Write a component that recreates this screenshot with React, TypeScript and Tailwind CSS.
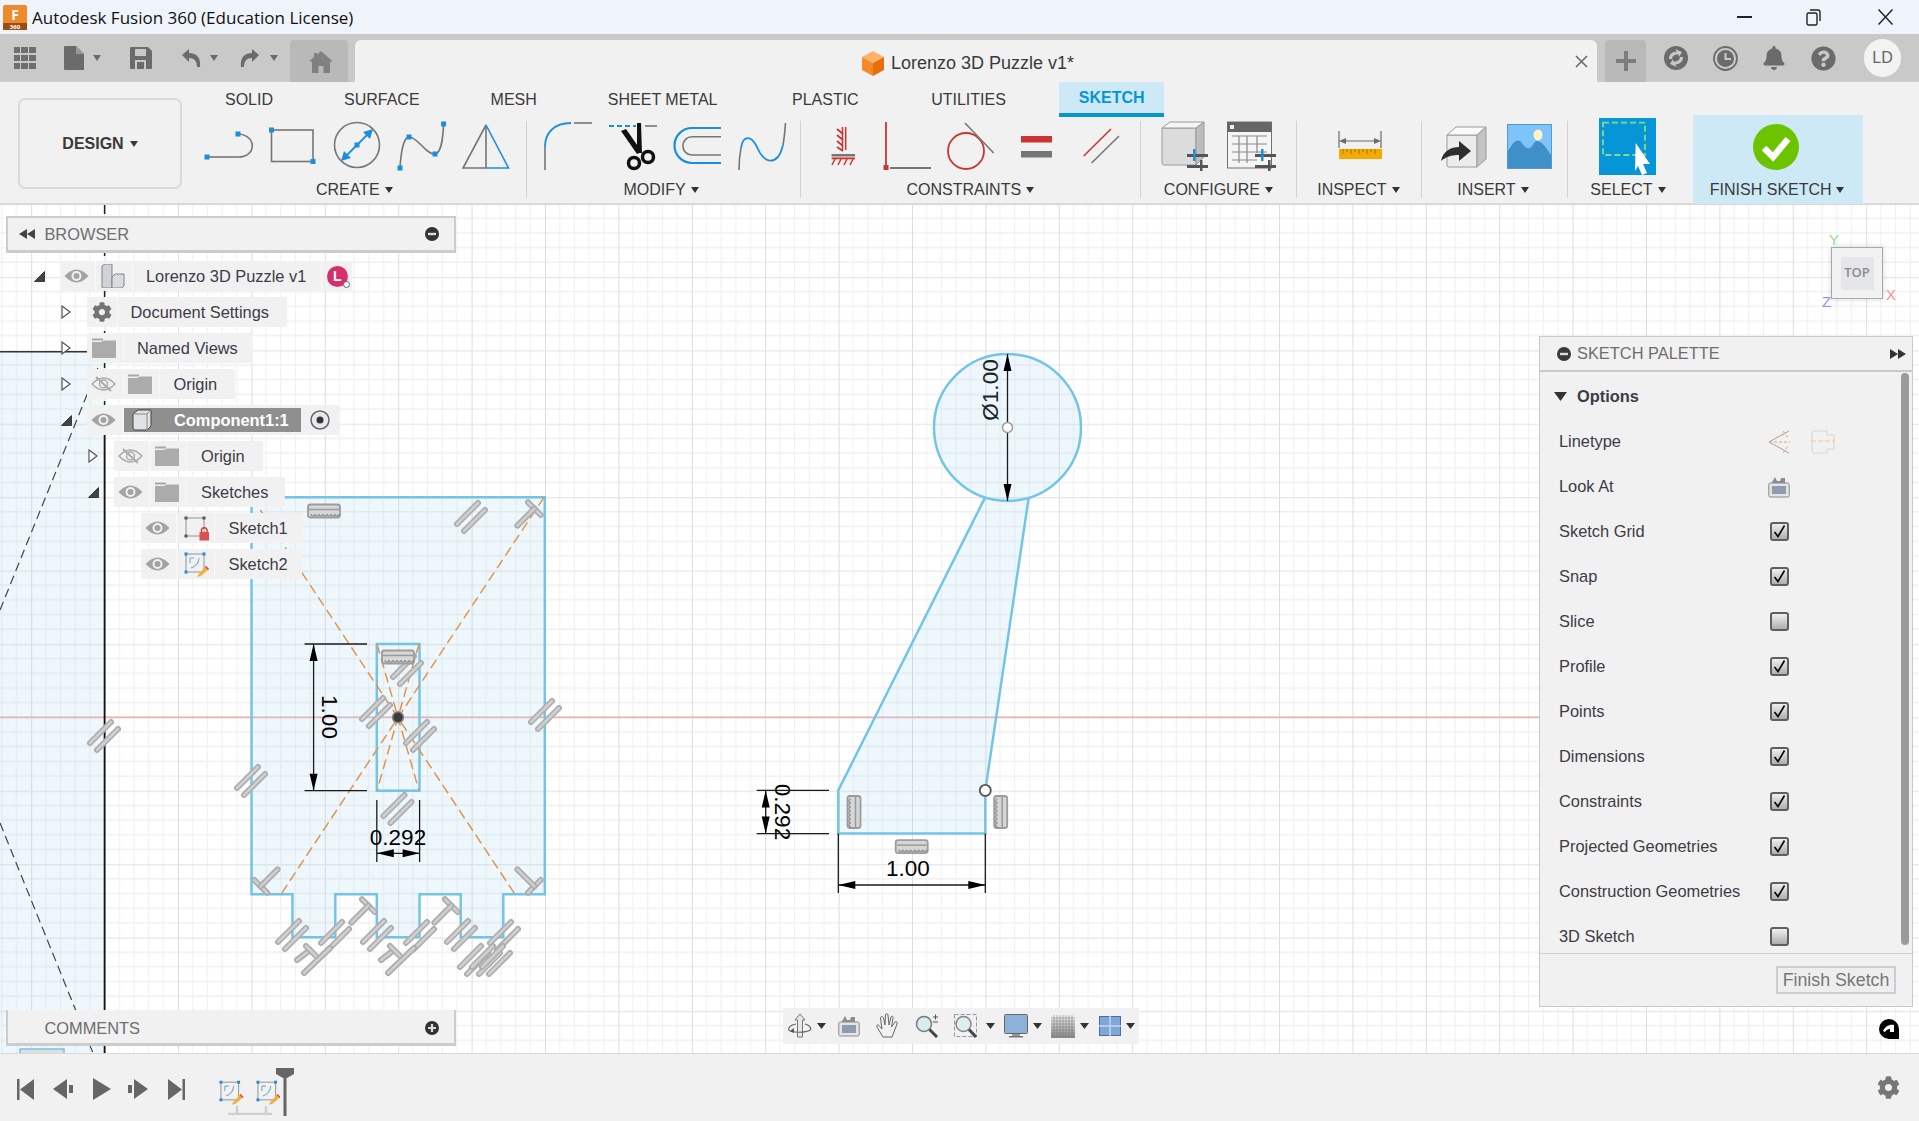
import type { ReactNode } from "react"
import { FaBell, FaCog, FaQuestionCircle } from "react-icons/fa"

const BLUE = "#1c8fdc"
const GREY = "#767676"
const DARK = "#6b6b6b"
const RED = "#cc3333"
const SKY = "#74c4e8"

const Caret = ({ className = "" }: { className?: string }) => (
  <svg width="8" height="6" viewBox="0 0 8 6" className={className}>
    <path d="M0 0H8L4 6Z" fill="currentColor" />
  </svg>
)

const Dot = ({ x, y, c = BLUE }: { x: number; y: number; c?: string }) => (
  <rect x={x - 2.5} y={y - 2.5} width="5" height="5" fill={c} />
)

const Tool = ({ children }: { children: ReactNode }) => (
  <svg width="48" height="48" viewBox="0 0 48 48" fill="none" className="shrink-0 overflow-visible">
    {children}
  </svg>
)

const Sliders = ({ x = 0 }: { x?: number }) => (
  <g>
    <rect x={x + 28} y="33" width="21" height="3" fill="#555" />
    <rect x={x + 28} y="44" width="21" height="3" fill="#555" />
    <rect x={x + 34} y="28" width="2.5" height="12" fill={BLUE} />
    <rect x={x + 41} y="39" width="2.5" height="11" fill="#555" />
  </g>
)

const Group = ({
  label,
  width,
  labelClass = "",
  children,
  divider = true,
}: {
  label: string
  width: string
  labelClass?: string
  children: ReactNode
  divider?: boolean
}) => (
  <div className={`flex h-[77px] shrink-0 flex-col items-center ${width} ${divider ? "border-r border-[#d2d2d2]" : ""}`}>
    <div className="flex h-[48px] gap-[16.4px]">{children}</div>
    <div className={`mt-[12px] flex h-[18px] items-center gap-[5px] text-[16px] leading-none text-[#3a3a3a] ${labelClass}`}>
      {label}
      <Caret className="text-[#333]" />
    </div>
  </div>
)

const Eye = ({ off = false }: { off?: boolean }) => (
  <svg width="25" height="16" viewBox="0 0 25 16">
    {off ? (
      <g fill="none" stroke="#a8a8a8" strokeWidth="1.4">
        <path d="M1 8Q12.5 -4 24 8Q12.5 20 1 8Z" />
        <circle cx="12.5" cy="8" r="4" />
        <path d="M5 1L20 15" strokeWidth="1.8" />
      </g>
    ) : (
      <g>
        <path d="M0.5 8Q12.5 -5 24.5 8Q12.5 21 0.5 8Z" fill="#a3a3a3" />
        <circle cx="12.5" cy="8" r="5" fill="#f1f1f1" />
        <circle cx="12.5" cy="8" r="3" fill="#a3a3a3" />
      </g>
    )}
  </svg>
)

const Folder = () => (
  <svg width="24" height="20" viewBox="0 0 24 20">
    <path d="M0 0.5H11V2.5H0Z" fill="#a8a8a8" />
    <path d="M0 4H9L12 2.5H24V20H0Z" fill="#ababab" />
  </svg>
)

const Tri = ({ open }: { open: boolean }) =>
  open ? (
    <svg width="11" height="11" viewBox="0 0 11 11">
      <path d="M0.5 10.5L10.5 0.5V10.5Z" fill="#444" stroke="#222" strokeWidth="0.8" />
    </svg>
  ) : (
    <svg width="10" height="14" viewBox="0 0 10 14">
      <path d="M1 1L9 7L1 13Z" fill="#fff" stroke="#555" strokeWidth="1.2" />
    </svg>
  )

const Cell = ({ w = "w-[36.5px] pr-[3px]", children }: { w?: string; children: ReactNode }) => (
  <div className={`flex h-full shrink-0 items-center justify-center border-r border-[#f9f9f9] ${w}`}>{children}</div>
)

const TreeRow = ({ indent, tri, children }: { indent: string; tri?: boolean; children: ReactNode }) => (
  <div className={`flex h-[30px] items-center ${indent}`}>
    <div className="flex w-[32px] shrink-0 items-center pl-[6px]">{tri !== undefined && <Tri open={tri} />}</div>
    <div className="flex h-full items-center bg-[#f1f1f1] text-[16.4px] text-[#3c3c48]">{children}</div>
  </div>
)

const SketchIcon = ({ lock = false }: { lock?: boolean }) => (
  <svg width="26" height="26" viewBox="0 0 26 26" fill="none">
    <path d="M3 3H21V21H3Z" stroke="#8a8a8a" strokeWidth="0.9" />
    {lock ? (
      <g>
        <rect x="1.5" y="1.5" width="3" height="3" fill="#555" />
        <rect x="19.5" y="1.5" width="3" height="3" fill="#555" />
        <rect x="1.5" y="19.5" width="3" height="3" fill="#555" />
        <path d="M18.5 17V14.500A3 3 0 0 1 24 14.500V17" stroke={RED} strokeWidth="1.4" />
        <rect x="16.5" y="17" width="10" height="8.500" fill="#d8514f" />
      </g>
    ) : (
      <g>
        <rect x="1.5" y="1.5" width="3" height="3" fill={BLUE} />
        <rect x="19.5" y="1.5" width="3" height="3" fill={BLUE} />
        <rect x="1.5" y="19.5" width="3" height="3" fill={BLUE} />
        <path d="M7 7H11M7 7V12M16 7C16 12 12 16 8 17" stroke="#78a8d0" strokeWidth="1.1" />
        <path d="M15 24L23 15L26 18L18 25L14 26Z" fill="#f0b23c" />
        <path d="M23 15L26 18L25 19L22 16Z" fill="#e9403c" />
      </g>
    )}
  </svg>
)

const Rod = ({ x1, y1, x2, y2 }: { x1: number; y1: number; x2: number; y2: number }) => (
  <g>
    <line x1={x1} y1={y1} x2={x2} y2={y2} stroke="#adadad" strokeWidth="6" strokeLinecap="round" />
    <line x1={x1} y1={y1} x2={x2} y2={y2} stroke="#cfcfcf" strokeWidth="2.5" strokeLinecap="round" />
  </g>
)

const Parallel = ({ x, y }: { x: number; y: number }) => (
  <g transform={`translate(${x} ${y})`}>
    <Rod x1={-14} y1={7} x2={7} y2={-14} />
    <Rod x1={-7} y1={14} x2={14} y2={-7} />
  </g>
)

const Perp = ({ x, y, r }: { x: number; y: number; r: number }) => (
  <g transform={`translate(${x} ${y}) rotate(${r})`}>
    <Rod x1={-9} y1={-9} x2={9} y2={-9} />
    <Rod x1={0} y1={-9} x2={0} y2={15} />
  </g>
)

const Comb = ({ x, y, r = 0 }: { x: number; y: number; r?: number }) => (
  <g transform={`translate(${x} ${y}) rotate(${r})`}>
    <rect x="-16" y="-6.5" width="32" height="13" rx="2.5" fill="#d6d6d6" stroke="#9c9c9c" strokeWidth="1.8" />
    <line x1="-15" y1="-1.5" x2="15" y2="-1.5" stroke="#999" strokeWidth="1.5" />
    <path
      d="M-13 3a2 2 0 0 0 4 0a2 2 0 0 0 4 0a2 2 0 0 0 4 0a2 2 0 0 0 4 0a2 2 0 0 0 4 0a2 2 0 0 0 4 0a2 2 0 0 0 4 0"
      stroke="#8f8f8f"
      strokeWidth="1.2"
      fill="none"
    />
  </g>
)

const Arrow = ({ x, y, dir }: { x: number; y: number; dir: "up" | "down" | "left" | "right" }) => {
  const r = { up: 0, down: 180, left: 270, right: 90 }[dir]
  return <path d="M0 0L-4 17H4Z" transform={`translate(${x} ${y}) rotate(${r})`} fill="#000" />
}

const Canvas = () => (
  <svg className="absolute inset-0 h-full w-full" viewBox="0 205 1919 848" preserveAspectRatio="none">
    <defs>
      <pattern id="grid" x="31.2" y="717.3" width="73.4" height="73.4" patternUnits="userSpaceOnUse">
        {[14.68, 29.36, 44.04, 58.72].map((p) => (
          <g key={p}>
            <line x1={p} y1="0" x2={p} y2="73.4" stroke="#efefef" strokeWidth="1" />
            <line x1="0" y1={p} x2="73.4" y2={p} stroke="#f0f0f0" strokeWidth="1.5" />
          </g>
        ))}
        <line x1="0.5" y1="0" x2="0.5" y2="73.4" stroke="#dddddd" strokeWidth="1" />
        <line x1="0" y1="0.5" x2="73.4" y2="0.5" stroke="#e6e6e6" strokeWidth="1.5" />
      </pattern>
    </defs>
    <rect x="0" y="205" width="1919" height="848" fill="#fff" />
    <rect x="0" y="205" width="1919" height="848" fill="url(#grid)" />

    {/* left sketch, cut off by the window */}
    <rect x="0" y="351.7" width="104.6" height="701.3" fill="#9bd3f0" fillOpacity="0.17" />
    <line x1="0" y1="717.3" x2="1540" y2="717.3" stroke="#f0abab" strokeWidth="1.5" />
    <line x1="0" y1="351.7" x2="90" y2="351.7" stroke="#333" strokeWidth="1.5" />
    <line x1="104.6" y1="205" x2="104.6" y2="420" stroke="#222" strokeWidth="1.5" strokeDasharray="9 5" />
    <line x1="104.6" y1="420" x2="104.6" y2="1053" stroke="#111" strokeWidth="1.8" />
    <line x1="0" y1="610" x2="99" y2="365" stroke="#444" strokeWidth="1.2" strokeDasharray="9 5" />
    <line x1="0" y1="823" x2="93" y2="1053" stroke="#444" strokeWidth="1.2" strokeDasharray="9 5" />
    <Parallel x={104} y={736} />

    {/* puzzle piece */}
    <path
      d="M251.5 497.3H544.8V894.3H503.3V937.3H460.7V894.3H419.5V937.3H376.8V894.3H335.3V937.3H292.5V894.3H251.5Z"
      fill="#9bd3f0"
      fillOpacity="0.17"
      stroke={SKY}
      strokeWidth="2.5"
    />
    <rect x="376.8" y="644" width="42.7" height="146.7" fill="none" stroke={SKY} strokeWidth="2.5" />
    <g stroke="#df9450" strokeWidth="1.5" strokeDasharray="10 5" fill="none">
      <line x1="544" y1="497.3" x2="281" y2="894.3" />
      <line x1="252" y1="497.3" x2="515" y2="894.3" />
      <line x1="377" y1="644" x2="419" y2="790.7" />
      <line x1="419" y1="644" x2="377" y2="790.7" />
    </g>
    <circle cx="398" cy="717.3" r="5.5" fill="#3c3c3c" stroke="#8a8a8a" strokeWidth="1.5" />

    <Comb x={324} y={511} />
    <Parallel x={471} y={517} />
    <Perp x={528} y={515} r={45} />
    <Parallel x={407} y={670} />
    <Comb x={398} y={657} />
    <Parallel x={376} y={712} />
    <Parallel x={420} y={736} />
    <Parallel x={545} y={715} />
    <Parallel x={251} y={781} />
    <Parallel x={397.5} y={809} />
    <Perp x={267} y={880} r={225} />
    <Perp x={528} y={880} r={135} />
    <Perp x={362} y={912} r={45} />
    <Perp x={445} y={912} r={45} />
    {[292, 335, 377, 420, 461, 504].map((x, i) => (
      <Parallel key={x} x={x} y={i % 2 === 0 ? 935 : 936} />
    ))}
    {[0, 84].map((d) => (
      <g key={d}>
        <Rod x1={304 + d} y1={973} x2={330 + d} y2={948} />
        <Rod x1={297 + d} y1={960} x2={310 + d} y2={950} />
        <Rod x1={306 + d} y1={946} x2={316 + d} y2={956} />
      </g>
    ))}
    <Parallel x={474} y={960} />
    <Parallel x={486} y={960} />
    <Parallel x={496} y={960} />
    <rect x="20" y="1049" width="44" height="6" fill="#dfdfdf" stroke={SKY} strokeWidth="1.5" />

    {/* dimensions of the piece */}
    <g stroke="#1a1a1a" strokeWidth="1.3">
      <line x1="304.6" y1="644" x2="367" y2="644" />
      <line x1="304.6" y1="790.7" x2="367" y2="790.7" />
      <line x1="313.6" y1="644" x2="313.6" y2="790.7" />
      <line x1="376.8" y1="800" x2="376.8" y2="862" />
      <line x1="419.6" y1="800" x2="419.6" y2="862" />
      <line x1="376.8" y1="853.3" x2="419.6" y2="853.3" />
    </g>
    <Arrow x={313.6} y={644} dir="up" />
    <Arrow x={313.6} y={790.7} dir="down" />
    <Arrow x={376.8} y={853.3} dir="left" />
    <Arrow x={419.6} y={853.3} dir="right" />
    <g fontFamily="'Liberation Sans', sans-serif" fontSize="22.5" fill="#000" textAnchor="middle">
      <text transform="translate(322 717) rotate(90)">1.00</text>
      <text x="398" y="845">0.292</text>
      <text transform="translate(998 390) rotate(-90)">Ø1.00</text>
      <text transform="translate(775 812) rotate(90)">0.292</text>
      <text x="908" y="876">1.00</text>
    </g>

    {/* keyhole sketch on the right */}
    <path d="M838.3 833.6V790.4L985 497.6H1028.7L985.3 790.4V833.6Z" fill="#9bd3f0" fillOpacity="0.17" />
    <path d="M985 497.6L838.3 790.4V833.6H985.3V790.4L1028.7 497.6" fill="none" stroke={SKY} strokeWidth="2.5" />
    <circle cx="1007.5" cy="427.5" r="73.5" fill="#9bd3f0" fillOpacity="0.17" stroke={SKY} strokeWidth="2.5" />
    <g stroke="#1a1a1a" strokeWidth="1.3">
      <line x1="1007.5" y1="354" x2="1007.5" y2="501" />
      <line x1="756.7" y1="790.4" x2="829" y2="790.4" />
      <line x1="756.7" y1="833.6" x2="829" y2="833.6" />
      <line x1="765.7" y1="790.4" x2="765.7" y2="833.6" />
      <line x1="838.3" y1="833.6" x2="838.3" y2="893" />
      <line x1="985.3" y1="833.6" x2="985.3" y2="893" />
      <line x1="838.3" y1="885" x2="985.3" y2="885" />
    </g>
    <Arrow x={1007.5} y={354} dir="up" />
    <Arrow x={1007.5} y={501} dir="down" />
    <Arrow x={765.7} y={790.4} dir="up" />
    <Arrow x={765.7} y={833.6} dir="down" />
    <Arrow x={838.3} y={885} dir="left" />
    <Arrow x={985.3} y={885} dir="right" />
    <circle cx="1007.5" cy="427.5" r="5" fill="#fff" stroke="#9a9a9a" strokeWidth="1.5" />
    <circle cx="985.3" cy="790.4" r="5.5" fill="#fff" stroke="#555" strokeWidth="1.8" />
    <Comb x={854} y={812} r={90} />
    <Comb x={1000.7} y={812} r={90} />
    <Comb x={911.7} y={846.6} />
  </svg>
)

const Check = ({ on }: { on: boolean }) => (
  <div className="flex h-[19px] w-[19px] items-center justify-center rounded-[3px] border-2 border-[#5f5f5f] bg-linear-to-b from-[#f0f0f0] to-[#aeaeae]">
    {on && (
      <svg width="13" height="13" viewBox="0 0 13 13" fill="none">
        <path d="M1.5 7L5 11.5L11.5 0.5" stroke="#000" strokeWidth="1.6" />
      </svg>
    )}
  </div>
)

const paletteRows: [string, boolean][] = [
  ["Sketch Grid", true],
  ["Snap", true],
  ["Slice", false],
  ["Profile", true],
  ["Points", true],
  ["Dimensions", true],
  ["Constraints", true],
  ["Projected Geometries", true],
  ["Construction Geometries", true],
  ["3D Sketch", false],
]

const LookAt = ({ size = 22 }: { size?: number }) => (
  <svg width={size} height={size} viewBox="0 0 22 22" fill="none">
    <path d="M3 8L7 1L9 5H12L13 2H17V8Z" fill="#8d8d8d" />
    <rect x="0.8" y="7" width="20.4" height="14" rx="1.5" fill="#e4e4e4" stroke="#8a8a8a" />
    <rect x="4" y="10" width="14" height="8" fill="#8f9cb0" />
  </svg>
)

const SketchPalette = () => (
  <div className="absolute left-[1539px] top-[131px] w-[374px] text-[16.4px] text-[#3c3c44]">
    <div className="flex h-[36px] items-center border border-b-2 border-[#c9c9c9] bg-[#f1f1f1] pl-[17px] pr-[6px]">
      <svg width="14" height="14" viewBox="0 0 14 14">
        <circle cx="7" cy="7" r="7" fill="#3a3a3a" />
        <rect x="3" y="5.8" width="8" height="2.4" fill="#ddd" />
      </svg>
      <span className="ml-[6px] flex-1 text-[16.4px] text-[#6e6e6e]">SKETCH PALETTE</span>
      <svg width="16" height="10" viewBox="0 0 16 10">
        <path d="M0 0L8 5L0 10ZM8 0L16 5L8 10Z" fill="#333" />
      </svg>
    </div>
    <div className="relative h-[581px] overflow-hidden border-x border-[#c9c9c9] bg-[#f1f1f1] pl-[19px] pt-[2px]">
      <div className="flex h-[45px] items-center gap-[10px] font-bold">
        <svg width="13" height="9" viewBox="0 0 13 9" className="-ml-[5px]">
          <path d="M0 0H13L6.5 9Z" fill="#333" />
        </svg>
        Options
      </div>
      <div className="flex h-[45px] items-center">
        <span className="w-[210px]">Linetype</span>
        <svg width="22" height="24" viewBox="0 0 22 24" fill="none" className="-ml-[1px]">
          <path d="M21 1L1 12L21 23" stroke="#a0a0a0" />
          <path d="M1 12H22M15 1L20 8M15 23L20 16" stroke="#f0a060" strokeDasharray="3 2" />
        </svg>
        <svg width="24" height="24" viewBox="0 0 24 24" fill="none" className="ml-[21px]">
          <path d="M4 1H16V5H23V19H16V23H4A3 3 0 0 1 1 20V4A3 3 0 0 1 4 1Z" stroke="#d8d8d8" strokeWidth="1.2" />
          <path d="M0 11H24" stroke="#f4c49a" strokeDasharray="5 2" />
        </svg>
      </div>
      <div className="flex h-[45px] items-center">
        <span className="w-[209px]">Look At</span>
        <LookAt />
      </div>
      {paletteRows.map(([label, on]) => (
        <div key={label} className="flex h-[45px] items-center">
          <span className="w-[211px]">{label}</span>
          <Check on={on} />
        </div>
      ))}
      <div className="absolute left-[361px] top-[1px] h-[572px] w-[8px] rounded-full bg-[#9b9b9b]" />
    </div>
    <div className="flex h-[54px] items-center justify-end border border-[#c9c9c9] border-t-[#cfcfcf] bg-[#f1f1f1] pr-[16px]">
      <div className="flex h-[28px] w-[120px] items-center justify-center border-2 border-[#cdcdcd] bg-[#eeeeee] text-[17.8px] text-[#777]">
        Finish Sketch
      </div>
    </div>
  </div>
)

const NavCaret = ({ className }: { className: string }) => (
  <svg width="9" height="6" viewBox="0 0 9 6" className={className}>
    <path d="M0 0H9L4.5 6Z" fill="#333" />
  </svg>
)

const NavBar = () => (
  <div className="absolute left-[783px] top-[803px] flex h-[36px] w-[356px] items-center bg-[#f1f1f1]">
    <svg width="24" height="24" viewBox="0 0 24 24" fill="none" className="ml-[5px]">
      <path d="M12 0L17 6H14.5V23H9.5V6H7Z" fill="#e8e8e8" stroke="#777" />
      <path d="M8 10C2 11 0 14 1 16C3 19 18 19 22 16C24 14 21 11 17 10" stroke="#666" strokeWidth="1.2" />
      <path d="M6 14L2 17L6 19Z" fill="#555" />
    </svg>
    <NavCaret className="ml-[5px]" />
    <div className="ml-[12px] flex">
      <LookAt />
    </div>
    <svg width="24" height="26" viewBox="0 0 24 26" fill="#f2f2f2" stroke="#666" className="ml-[15px]">
      <path d="M8 24L2 14C1 12 3 11 4.5 13L7 16L5.5 5C5.5 3 8 3 8.5 5L10 12L10.5 2C10.5 0.5 13 0.5 13 2L14 12L16 4C16.5 2.5 18.5 3 18 5L16.5 14L20 9C21 8 23 9 22 11L17 24Z" />
    </svg>
    <svg width="24" height="24" viewBox="0 0 24 24" fill="none" className="ml-[16px]">
      <circle cx="9" cy="10" r="7.5" fill="#dbeaec" stroke="#6f7f80" strokeWidth="1.5" />
      <path d="M14.5 15.5L22 23" stroke="#444" strokeWidth="3" />
      <path d="M18 3H23M20.5 0.5V5.5M18 8H23" stroke="#555" />
    </svg>
    <svg width="24" height="24" viewBox="0 0 24 24" fill="none" className="ml-[15px]">
      <rect x="0.5" y="0.5" width="22" height="22" stroke="#999" strokeDasharray="4 2" />
      <circle cx="9.5" cy="10" r="7.5" fill="#e2eeee" stroke="#7b8a8b" strokeWidth="1.5" />
      <path d="M15 15.5L22 23" stroke="#444" strokeWidth="3" />
    </svg>
    <NavCaret className="ml-[8px]" />
    <svg width="24" height="24" viewBox="0 0 24 24" className="ml-[9px]">
      <rect x="0.5" y="0.5" width="23" height="19" rx="1" fill="#8fb2dc" stroke="#666" />
      <rect x="8" y="20" width="8" height="2" fill="#999" />
      <rect x="5" y="22" width="14" height="1.5" fill="#777" />
    </svg>
    <NavCaret className="ml-[5px]" />
    <svg width="24" height="23" viewBox="0 0 24 23" className="ml-[9px]">
      <defs>
        <linearGradient id="gridfade" x1="0" y1="0" x2="0" y2="1">
          <stop offset="0" stopColor="#f4f4f4" />
          <stop offset="1" stopColor="#8a8a8a" />
        </linearGradient>
      </defs>
      <rect width="24" height="23" fill="url(#gridfade)" />
      {[3, 6, 9, 12, 15, 18, 21].map((p) => (
        <g key={p}>
          <line x1={p} y1="0" x2={p} y2="23" stroke="#777" strokeWidth="0.5" />
          <line x1="0" y1={p} x2="24" y2={p} stroke="#777" strokeWidth="0.5" />
        </g>
      ))}
    </svg>
    <NavCaret className="ml-[5px]" />
    <svg width="22" height="20" viewBox="0 0 22 20" className="ml-[10px]">
      <rect x="0.5" y="0.5" width="21" height="19" fill="#7ea6d8" stroke="#4a6d9c" />
      <path d="M11 0V20M0 10H22" stroke="#c7d8ec" strokeWidth="1.5" />
    </svg>
    <NavCaret className="ml-[5px]" />
  </div>
)

const ViewCube = () => (
  <div className="absolute left-[1827px] top-[28px] h-[80px] w-[70px] text-[15px]">
    <span className="absolute left-[2px] top-[-4px] text-[#8fe08f]">Y</span>
    <div className="absolute left-[4px] top-[14px] flex h-[52px] w-[52px] items-center justify-center border border-[#a8a8a8] bg-[#f1f2f3] shadow-[0_0_6px_rgba(0,0,0,0.15)]">
      <div className="flex h-[33px] w-[33px] items-center justify-center bg-[#e4e6e9] font-['Open_Sans',sans-serif] text-[13px] font-semibold text-[#8b8b8b]">
        TOP
      </div>
    </div>
    <span className="absolute left-[59px] top-[51px] text-[#ff8f8f]">X</span>
    <span className="absolute left-[-5px] top-[58px] text-[#8f8fff]">Z</span>
  </div>
)

const Browser = () => (
  <div className="absolute left-[6.4px] top-[11px] w-[450px]">
    <div className="mb-[8px] flex h-[37px] items-center border-2 border-b-[3px] border-[#cccccc] bg-[#f1f1f1] pl-[11px] pr-[15px]">
      <svg width="16" height="10" viewBox="0 0 16 10">
        <path d="M8 0L0 5L8 10ZM16 0L8 5L16 10Z" fill="#444" />
      </svg>
      <span className="ml-[9px] flex-1 text-[16.4px] text-[#6e6e6e]">BROWSER</span>
      <svg width="14" height="14" viewBox="0 0 14 14">
        <circle cx="7" cy="7" r="7" fill="#333" />
        <rect x="3" y="5.8" width="8" height="2.4" fill="#ddd" />
      </svg>
    </div>
    <div className="flex flex-col gap-[6px]">
      <TreeRow indent="ml-[21.6px]" tri={true}>
        <Cell>
          <Eye />
        </Cell>
        <Cell>
          <svg width="24" height="24" viewBox="0 0 24 24">
            <path d="M1 2L4 0H11V24H2A1 1 0 0 1 1 23Z" fill="#cfd3d8" stroke="#7c7c7c" strokeWidth="0.9" />
            <path d="M11 13L14 10H23V22L21 24H11Z" fill="#d8dce0" stroke="#7c7c7c" strokeWidth="0.9" />
          </svg>
        </Cell>
        <span className="pl-[13px] pr-[15px]">Lorenzo 3D Puzzle v1</span>
        <div className="flex h-full w-[31px] items-center justify-center border-l border-[#f9f9f9]">
          <div className="relative flex h-[21px] w-[21px] items-center justify-center rounded-full bg-[#d52f6d] text-[14px] font-bold text-white">
            L
            <span className="absolute bottom-[-1px] right-[-2px] h-[7px] w-[7px] rounded-full border border-[#666] bg-white" />
          </div>
        </div>
      </TreeRow>
      <TreeRow indent="ml-[49.1px]" tri={false}>
        <Cell w="w-[31px]">
          <FaCog size={20} color="#747474" />
        </Cell>
        <span className="pl-[12px] pr-[18px]">Document Settings</span>
      </TreeRow>
      <TreeRow indent="ml-[49.1px]" tri={false}>
        <Cell>
          <Folder />
        </Cell>
        <span className="pl-[13px] pr-[15px]">Named Views</span>
      </TreeRow>
      <TreeRow indent="ml-[49.1px]" tri={false}>
        <Cell>
          <Eye off />
        </Cell>
        <Cell>
          <Folder />
        </Cell>
        <span className="pl-[13px] pr-[18px]">Origin</span>
      </TreeRow>
      <TreeRow indent="ml-[49.1px]" tri={true}>
        <Cell>
          <Eye />
        </Cell>
        <div className="flex h-[24px] w-[177px] items-center bg-[#8f8f8f] font-bold text-white">
          <div className="flex w-[37px] shrink-0 justify-center">
            <svg width="20" height="22" viewBox="0 0 20 22">
              <path d="M1 5L6 1H19V17L15 21H3A2 2 0 0 1 1 19Z" fill="#dfe2e6" stroke="#444" />
              <path d="M15 5V21M15 5L19 1M1 5H15" stroke="#888" fill="none" />
            </svg>
          </div>
          <span className="pl-[13px]">Component1:1</span>
        </div>
        <div className="flex h-full w-[38px] items-center justify-center">
          <svg width="20" height="20" viewBox="0 0 20 20">
            <circle cx="10" cy="10" r="9" fill="#e8e8ee" stroke="#666" strokeWidth="1.5" />
            <circle cx="10" cy="10" r="3.5" fill="#333" />
          </svg>
        </div>
      </TreeRow>
      <TreeRow indent="ml-[75.6px]" tri={false}>
        <Cell>
          <Eye off />
        </Cell>
        <Cell>
          <Folder />
        </Cell>
        <span className="pl-[14px] pr-[18px]">Origin</span>
      </TreeRow>
      <TreeRow indent="ml-[75.6px]" tri={true}>
        <Cell>
          <Eye />
        </Cell>
        <Cell>
          <Folder />
        </Cell>
        <span className="pl-[14px] pr-[17px]">Sketches</span>
      </TreeRow>
      <TreeRow indent="ml-[102.6px]">
        <Cell>
          <Eye />
        </Cell>
        <Cell w="w-[38px]">
          <SketchIcon lock />
        </Cell>
        <span className="pl-[13px] pr-[15px]">Sketch1</span>
      </TreeRow>
      <TreeRow indent="ml-[102.6px]">
        <Cell>
          <Eye />
        </Cell>
        <Cell w="w-[38px]">
          <SketchIcon />
        </Cell>
        <span className="pl-[13px] pr-[14px]">Sketch2</span>
      </TreeRow>
    </div>
  </div>
)

const App = () => (
  <div className="flex h-[1121px] w-[1919px] flex-col overflow-hidden bg-white font-['Liberation_Sans',sans-serif]">
    {/* window title */}
    <div className="flex h-[34px] shrink-0 items-center bg-[#eff3fa] font-['Open_Sans',sans-serif]">
      <svg width="24" height="25" viewBox="0 0 24 25" className="ml-[3px]">
        <path d="M2 0H22A2 2 0 0 1 24 2V25H0V2A2 2 0 0 1 2 0Z" fill="#ef8a2c" />
        <rect y="18" width="24" height="7" fill="#9a4d14" />
        <text x="12" y="14.5" textAnchor="middle" fontSize="14" fontWeight="700" fill="#fff">F</text>
        <text x="12" y="24" textAnchor="middle" fontSize="6" fontWeight="700" fill="#fff">360</text>
      </svg>
      <span className="ml-[5px] pt-[2px] text-[17px] text-[#111]">Autodesk Fusion 360 (Education License)</span>
      <div className="ml-auto flex items-center">
        <div className="h-[1.5px] w-[15px] bg-[#222]" />
        <svg width="15" height="17" viewBox="0 0 15 17" fill="none" stroke="#222" strokeWidth="1.4" className="ml-[54px]">
          <rect x="1" y="4" width="10" height="12" rx="1.5" />
          <path d="M4 1H12A2 2 0 0 1 14 3V12" />
        </svg>
        <svg width="15" height="16" viewBox="0 0 15 16" stroke="#222" strokeWidth="1.5" className="ml-[57px] mr-[26.5px]">
          <path d="M0.5 0.5L14.5 15.5M14.5 0.5L0.5 15.5" />
        </svg>
      </div>
    </div>

    {/* document tabs */}
    <div className="flex h-[48px] shrink-0 items-end bg-[#c9c9c9]">
      <div className="flex h-[42px] items-center pb-[6px] text-[#6b6b6b]">
        <div className="ml-[13.5px] grid h-[22px] w-[22px] grid-cols-3 gap-[1.5px]">
          {Array.from({ length: 9 }).map((_, i) => (
            <div key={i} className="bg-[#6e6e6e]" />
          ))}
        </div>
        <svg width="20" height="24" viewBox="0 0 20 24" className="ml-[28.5px]">
          <path d="M1 0H12L20 8V24H1A1 1 0 0 1 0 23V1A1 1 0 0 1 1 0Z" fill={DARK} />
          <path d="M12 0V8H20" fill="#999" />
        </svg>
        <Caret className="ml-[9px]" />
        <svg width="22" height="22" viewBox="0 0 22 22" className="ml-[29px]">
          <path d="M1 0H18L22 4V21A1 1 0 0 1 21 22H1A1 1 0 0 1 0 21V1A1 1 0 0 1 1 0Z" fill={DARK} />
          <rect x="5" y="2" width="11" height="7" fill="#c9c9c9" />
          <rect x="5" y="13" width="11" height="9" fill="#c9c9c9" />
          <rect x="7" y="15" width="7" height="7" fill={DARK} />
        </svg>
        <svg width="21" height="20" viewBox="0 0 21 20" fill="none" className="ml-[29px]">
          <path d="M1 7L8 1V5C16 5 20 10 19 19H16C16 13 13 10 8 10V14Z" fill={DARK} />
        </svg>
        <Caret className="ml-[8px]" />
        <svg width="21" height="20" viewBox="0 0 21 20" fill="none" className="ml-[21px]">
          <path d="M20 7L13 1V5C5 5 1 10 2 19H5C5 13 8 10 13 10V14Z" fill={DARK} />
        </svg>
        <Caret className="ml-[10px]" />
      </div>
      <div className="ml-[12px] flex h-[42px] w-[58px] items-center justify-center rounded-t-[4px] bg-[#b9b9b9] pl-[3px]">
        <svg width="24" height="22" viewBox="0 0 24 22" className="mt-[2px]">
          <path d="M12 0L24 10.5H21V22H14.5V15H9.5V22H3V10.5H0L5 6V2H8V3.5Z" fill="#808080" />
        </svg>
      </div>
      <div className="ml-[7px] flex h-[42px] w-[1242px] items-center rounded-t-[6px] bg-[#f1f1f1]">
        <div className="mt-[4px] flex flex-1 items-center justify-center pl-[6px]">
          <svg width="22" height="25" viewBox="0 0 22 25">
            <path d="M11 0L22 6L11 12L0 6Z" fill="#ffb266" />
            <path d="M0 6L11 12V25L0 19Z" fill="#f58a2a" />
            <path d="M22 6L11 12V25L22 19Z" fill="#e86e0c" />
          </svg>
          <span className="ml-[7px] text-[18px] text-[#3a3a3a]">Lorenzo 3D Puzzle v1*</span>
        </div>
        <svg width="13" height="13" viewBox="0 0 13 13" stroke="#666" strokeWidth="1.5" className="mr-[9px]">
          <path d="M1 1L12 12M12 1L1 12" />
        </svg>
      </div>
      <div className="ml-[8px] flex h-[42px] w-[41px] items-center justify-center rounded-t-[4px] bg-[#b9b9b9]">
        <svg width="20" height="20" viewBox="0 0 20 20">
          <path d="M8 0H12V8H20V12H12V20H8V12H0V8H8Z" fill="#7c7c7c" />
        </svg>
      </div>
      <div className="flex h-[42px] items-center pb-[6px]">
        <svg width="24" height="24" viewBox="0 0 24 24" className="ml-[18px]">
          <circle cx="12" cy="12" r="12" fill={DARK} />
          <path d="M5 13C5 8 9 5 13 6L11 3L18 6L15 11L14.5 8.5C11 8 8 10 8 13M19 11C19 16 15 19 11 18L13 21L6 18L9 13L9.5 15.5C13 16 16 14 16 11Z" fill="#c9c9c9" />
        </svg>
        <svg width="25" height="25" viewBox="0 0 25 25" fill="none" className="ml-[24.5px]">
          <circle cx="12.5" cy="12.5" r="11.5" fill="#c9c9c9" stroke={DARK} strokeWidth="1.8" />
          <circle cx="12.5" cy="12.5" r="8.5" fill={DARK} />
          <path d="M12.5 7V13H18" stroke="#c9c9c9" strokeWidth="2" />
        </svg>
        <FaBell size={24} color={DARK} className="ml-[24.5px]" />
        <FaQuestionCircle size={25} color={DARK} className="ml-[25px]" />
        <div className="ml-[28px] flex h-[38px] w-[37px] items-center justify-center rounded-full bg-[#f3f3f3] text-[16px] text-[#666]">
          LD
        </div>
      </div>
    </div>

    {/* ribbon */}
    <div className="flex h-[123px] shrink-0 border-b-2 border-[#d9d9d9] bg-[#f1f1f1]">
      <div className="ml-[18px] mt-[16px] flex h-[91px] w-[164px] shrink-0 items-center justify-center gap-[6px] rounded-[7px] border-2 border-[#d9d9d9] text-[16px] font-bold text-[#3a3a3a]">
        DESIGN
        <Caret />
      </div>
      <div className="flex flex-col">
        <div className="ml-[43px] flex h-[35px] items-center gap-[71px] text-[16px] leading-none text-[#3a3a3a]">
          <span>SOLID</span>
          <span>SURFACE</span>
          <span>MESH</span>
          <span>SHEET METAL</span>
          <span className="ml-[3.5px]">PLASTIC</span>
          <span className="ml-[1.5px]">UTILITIES</span>
          <span className="ml-[-17.5px] flex h-[35px] items-center border-b-[4px] border-[#0696d7] bg-[#cde9f6] px-[19.5px] font-bold text-[#0696d7]">
            SKETCH
          </span>
        </div>
        <div className="mt-[4px] flex items-start">
          <Group label="CREATE" width="w-[344.6px] pl-[23px] pr-[16px]" labelClass="mr-[6px]">
            <Tool>
              <path d="M2 36H33" stroke={GREY} strokeWidth="1.6" />
              <path d="M33 36C52 36 52 14 33 13" stroke={GREY} strokeWidth="1.6" />
              <Dot x={2} y={36} />
              <Dot x={33} y={13} />
            </Tool>
            <Tool>
              <rect x="2.5" y="9" width="41.5" height="31.5" stroke={GREY} strokeWidth="1.6" />
              <Dot x={2.5} y={9} />
              <Dot x={44} y={40.5} />
            </Tool>
            <Tool>
              <circle cx="24" cy="24" r="22.5" stroke={GREY} strokeWidth="1.6" />
              <path d="M12 36L36 12" stroke={BLUE} strokeWidth="1.8" />
              <path d="M8 40L11 30L18 37ZM40 8L37 18L30 11Z" fill={BLUE} />
              <Dot x={24} y={24} />
            </Tool>
            <Tool>
              <path d="M2 47C3 30 6 16 11 16C20 16 28 34 37 33C44 32 45 15 45.6 3" stroke={GREY} strokeWidth="1.6" />
              <Dot x={2} y={47} />
              <Dot x={11} y={16} />
              <Dot x={37} y={33} />
              <Dot x={45.6} y={3} />
            </Tool>
            <Tool>
              <path d="M24 4L1 47H24Z" stroke={GREY} strokeWidth="1.6" />
              <path d="M24 4L46.5 47H24" stroke={BLUE} strokeWidth="1.6" />
            </Tool>
          </Group>
          <Group label="MODIFY" width="w-[274.4px] pl-[18.4px] pr-[15px]" labelClass="mr-[8px]">
            <Tool>
              <path d="M1 49V26" stroke={GREY} strokeWidth="1.6" />
              <path d="M1 26C1 12 10 2 27 2" stroke={BLUE} strokeWidth="1.8" />
              <path d="M30 2H48" stroke={GREY} strokeWidth="1.6" />
            </Tool>
            <Tool>
              <path d="M0 5H27" stroke={BLUE} strokeWidth="1.8" strokeDasharray="5 3" />
              <path d="M36 5H48" stroke={GREY} strokeWidth="1.6" />
              <path d="M12 10L17 8L33 31L28 33Z" fill="#111" />
              <path d="M28 2H32L33 32H28Z" fill="#111" />
              <circle cx="25" cy="42" r="5.5" stroke="#111" strokeWidth="3.5" />
              <circle cx="39" cy="36" r="5.5" stroke="#111" strokeWidth="3.5" />
            </Tool>
            <Tool>
              <path d="M48 7H19A17.5 17.5 0 0 0 19 42H48" stroke={BLUE} strokeWidth="2.2" />
              <path d="M48 15.7H19A9 9 0 0 0 19 34H48" stroke={GREY} strokeWidth="1.6" />
            </Tool>
            <Tool>
              <path d="M1 49C1 40 2 32 3 27" stroke={GREY} strokeWidth="1.6" />
              <path d="M3 27C5 14 13 14 19 26C24 38 32 44 40 36C43 32 44 28 45 24" stroke={BLUE} strokeWidth="1.8" />
              <path d="M45 24C46.5 16 47 8 47.5 2" stroke={GREY} strokeWidth="1.6" />
            </Tool>
          </Group>
          <Group label="CONSTRAINTS" width="w-[339.6px] pl-[18px] pr-[16px]" labelClass="mr-[2px]">
            <Tool>
              <path d="M26.7 6V29M23.5 6V29" stroke={RED} strokeWidth="1.5" />
              <path d="M18 8L24 13M18 14L24 19M18 20L24 25M18 26L24 30" stroke={RED} strokeWidth="1.8" />
              <rect x="12.6" y="33" width="23.4" height="2.5" fill={GREY} />
              <rect x="12.6" y="36.5" width="23.4" height="1.8" fill={RED} />
              <path d="M16 38L13 44M22 38L19 44M28 38L25 44M34 38L31 44" stroke={RED} strokeWidth="1.5" />
            </Tool>
            <Tool>
              <path d="M3 1V44" stroke={RED} strokeWidth="1.8" />
              <rect x="0.5" y="44" width="5" height="5" fill={RED} />
              <path d="M7 47H48" stroke={GREY} strokeWidth="1.8" />
            </Tool>
            <Tool>
              <circle cx="19" cy="30" r="18" stroke={RED} strokeWidth="1.8" />
              <path d="M18 2L46.7 32" stroke={GREY} strokeWidth="1.6" />
            </Tool>
            <Tool>
              <rect x="9" y="15" width="31" height="6.5" fill={RED} />
              <rect x="9" y="30" width="31" height="6.5" fill={GREY} />
            </Tool>
            <Tool>
              <path d="M35 8L7.7 35" stroke={RED} strokeWidth="1.6" />
              <path d="M43 15L15.6 42" stroke={GREY} strokeWidth="1.6" />
            </Tool>
          </Group>
          <Group label="CONFIGURE" width="w-[156.2px] pl-[21.4px] pr-[21px]">
            <Tool>
              <path d="M0 7H34V44H2A2 2 0 0 1 0 42Z" fill="#dcdcdc" stroke="#9a9a9a" />
              <path d="M0 7L8 1H42L34 7Z" fill="#f5f5f5" stroke="#9a9a9a" />
              <path d="M34 7L42 1V36L34 44Z" fill="#bdbdbd" stroke="#9a9a9a" />
              <Sliders x={-3} />
            </Tool>
            <Tool>
              <rect x="0.5" y="1" width="44" height="46" fill="#f5f5f5" stroke="#707070" />
              <rect x="0.5" y="1" width="44" height="10" fill="#666" />
              <rect x="3" y="4" width="4" height="4" fill="#eee" />
              <path d="M5 15H40M5 23H40M5 31H40M5 39H30M12 15V42M20 15V42M30 15V32" stroke="#888" strokeWidth="1.2" />
              <Sliders />
            </Tool>
          </Group>
          <Group label="INSPECT" width="w-[125.2px] pl-[3px]" labelClass="mr-[4px]">
            <Tool>
              <path d="M3 10V27M45 10V27" stroke={DARK} strokeWidth="1.2" />
              <path d="M5 20H43" stroke={DARK} strokeWidth="1.2" />
              <path d="M3 20L10 17V23ZM45 20L38 17V23Z" fill={DARK} />
              <rect x="3" y="28" width="43" height="10" fill="#f5a800" />
              <path d="M7 28V33M11 28V31M15 28V33M19 28V31M23 28V33M27 28V31M31 28V33M35 28V31M39 28V33" stroke="#a87200" />
            </Tool>
          </Group>
          <Group label="INSERT" width="w-[146px] pl-[5px]" labelClass="mr-[8px]">
            <Tool>
              <path d="M6 14H36V46H8A2 2 0 0 1 6 44Z" fill="#ececec" stroke="#9a9a9a" />
              <path d="M6 14L15 6H45L36 14Z" fill="#fafafa" stroke="#9a9a9a" />
              <path d="M36 14L45 6V38L36 46Z" fill="#c4c4c4" stroke="#9a9a9a" />
              <path d="M0 40C2 30 10 26 18 26V20L30 30L18 40V34C10 34 5 36 0 40Z" fill="#2e2e2e" />
            </Tool>
            <Tool>
              <rect x="2.5" y="3.5" width="44" height="44" fill="#7fc4f8" stroke="#4f9bd2" />
              <path d="M3 47V30C8 22 12 16 17 22C21 28 25 30 29 22C33 16 40 24 46 34V47Z" fill="#3f8fc9" />
              <ellipse cx="33" cy="14" rx="4.5" ry="5.5" fill="#fff3c4" />
            </Tool>
          </Group>
          <Group label="SELECT" width="w-[125px] pr-[5px]" divider={false}>
            <Tool>
              <rect x="-5" y="-3" width="57" height="57" fill="#0696d7" />
              <rect x="-1" y="1.7" width="42" height="32.3" stroke="#7fdc90" strokeWidth="1.8" strokeDasharray="6 3" />
              <path d="M31.7 22L46 43H39L43 52L38 54L34 45L31 50Z" fill="#fff" />
            </Tool>
          </Group>
          <div className="-mt-[6px] flex h-[89px] w-[169.6px] shrink-0 flex-col items-center bg-[#cde9f6] pt-[8px]">
            <svg width="48" height="48" viewBox="0 0 48 48" className="-ml-[3px]">
              <circle cx="24" cy="24" r="23" fill="#6cc400" />
              <path d="M12 25L21 34L36 16" fill="none" stroke="#fff" strokeWidth="6.5" />
            </svg>
            <div className="mr-[2px] mt-[10px] flex h-[18px] items-center gap-[4px] text-[16px] leading-none text-[#3a3a3a]">
              FINISH SKETCH
              <Caret className="text-[#333]" />
            </div>
          </div>
        </div>
      </div>
    </div>

    {/* model area */}
    <div className="relative flex-1 overflow-hidden">
      <Canvas />
      <Browser />
      <ViewCube />
      <SketchPalette />
      <NavBar />
      <div className="absolute bottom-[7px] left-[6.4px] flex h-[36px] w-[450px] items-center border-x-2 border-b-[3px] border-[#cccccc] bg-[#f1f1f1] pl-[36px] pr-[15px] pt-[3px]">
        <span className="flex-1 text-[16.4px] text-[#6e6e6e]">COMMENTS</span>
        <svg width="14" height="14" viewBox="0 0 14 14">
          <circle cx="7" cy="7" r="7" fill="#333" />
          <path d="M3 7H11M7 3V11" stroke="#ddd" strokeWidth="2.2" />
        </svg>
      </div>
      <svg width="20" height="20" viewBox="0 0 20 20" className="absolute left-[1879px] top-[814px]">
        <path d="M10 0A10 10 0 0 1 20 10V20H10A10 10 0 0 1 10 0Z" fill="#000" />
        <path d="M4 12C6 8 10 5 15 6V13H11V10C9 10 7 11 6 13Z" fill="#fff" />
      </svg>
    </div>

    {/* timeline */}
    <div className="flex h-[68px] shrink-0 items-center border-t border-[#d9d9d9] bg-[#f1f1f1]">
      <div className="flex items-center pt-[3px] text-[#666]">
        <svg width="17" height="21" viewBox="0 0 17 21" className="ml-[17px]" fill="currentColor">
          <path d="M0 0H2.5V21H0ZM17 0V21L3 10.5Z" />
        </svg>
        <svg width="20" height="20" viewBox="0 0 20 20" className="ml-[19px]" fill="currentColor">
          <path d="M14 0V20L0 10ZM16 6H20V14H16Z" />
        </svg>
        <svg width="18" height="22" viewBox="0 0 18 22" className="ml-[19.5px]" fill="currentColor">
          <path d="M0 0L18 11L0 22Z" />
        </svg>
        <svg width="20" height="20" viewBox="0 0 20 20" className="ml-[17.5px]" fill="currentColor">
          <path d="M6 0V20L20 10ZM0 6H4V14H0Z" />
        </svg>
        <svg width="17" height="21" viewBox="0 0 17 21" className="ml-[20px]" fill="currentColor">
          <path d="M14.5 0H17V21H14.5ZM0 0V21L14 10.5Z" />
        </svg>
      </div>
      <div className="ml-[33px] flex w-[62px] gap-[11px] self-start pt-[25px]">
        <SketchIcon />
        <SketchIcon />
      </div>
      <div className="relative h-[68px] w-[20px]">
        <svg width="18" height="48" viewBox="0 0 18 48" className="absolute left-[-4px] top-[14px]">
          <path d="M0 0H18V6L11 10H7L0 6Z" fill="#666" />
          <rect x="7.5" y="8" width="3" height="40" fill="#666" />
        </svg>
        <svg width="48" height="12" viewBox="0 0 48 12" fill="none" className="absolute left-[-54px] top-[49px]">
          <path d="M2 11H46M11 11V3M40 11V3" stroke="#cfcfcf" strokeWidth="2.5" />
        </svg>
      </div>
      <FaCog size={23} color="#777" className="ml-auto mr-[19px]" />
    </div>
  </div>
)

export default App
